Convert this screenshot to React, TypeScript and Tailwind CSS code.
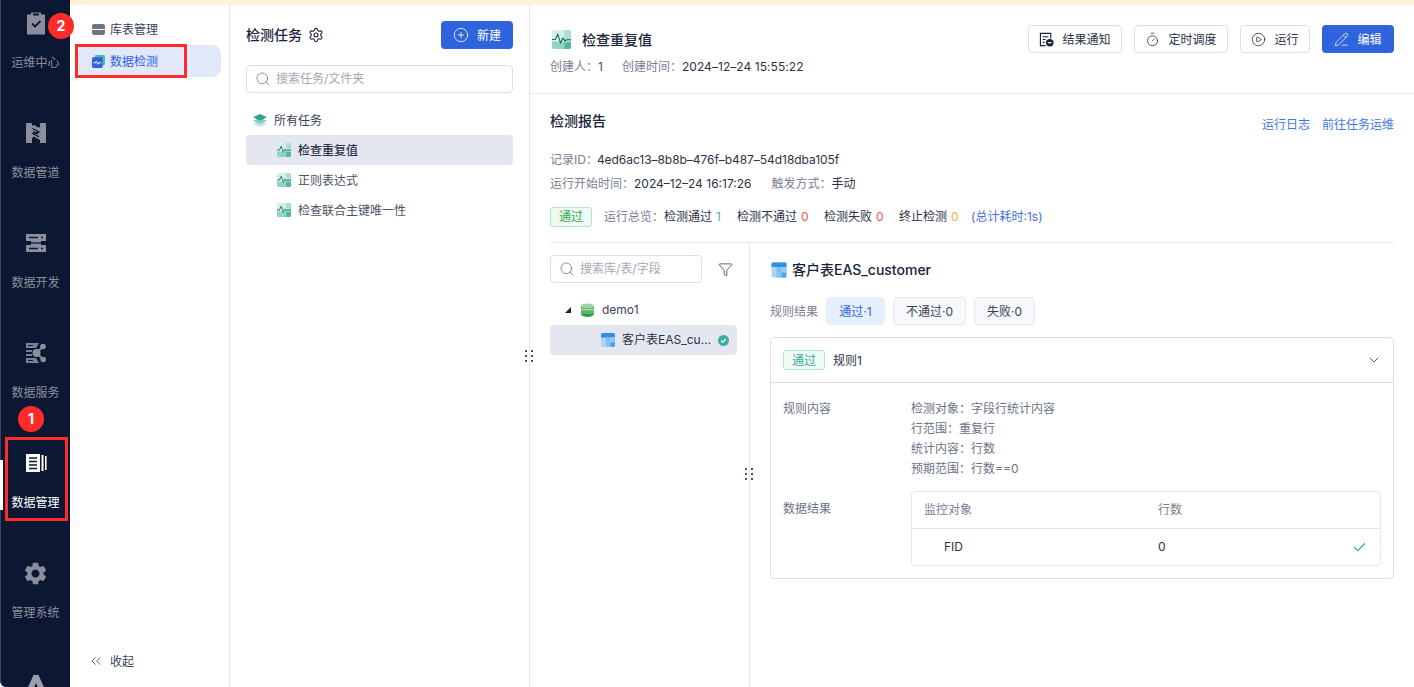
import React from "react";
import { MdSettings } from "react-icons/md";
import { Search, Settings, ChevronDown, Check, ChevronsLeft, Filter, CirclePlay, PencilLine, Timer, CirclePlus } from "lucide-react";

const FONT = "[font-family:Inter,'Noto_Sans_CJK_SC',sans-serif]";

function ClipIcon() {
  return (
    <svg width="24" height="24" viewBox="0 0 24 24">
      <path d="M3 3.5h4V1.5h10v2h4v20H3z" fill="#8b8f9c" />
      <path d="M8 12.5l3 3 5.5-5.5" fill="none" stroke="#0b1733" strokeWidth="1.8" />
      <rect x="9" y="2.5" width="6" height="2" fill="#0b1733" />
    </svg>
  );
}
function PipeIcon() {
  return (
    <svg width="20" height="20" viewBox="0 0 20 20">
      <rect width="20" height="20" fill="#8b8f9c" />
      <path d="M6 0h8v4l-1.5.8L8 2 6 3z" fill="#0b1733" />
      <path d="M6 20h8v-3l-2-1-4-2.5L6 15z" fill="#0b1733" />
      <path d="M6.5 5.5l6.5 3.5-6 1.5 6 3.5M7 8.5l5 2.8" fill="none" stroke="#0b1733" strokeWidth="1.3" />
    </svg>
  );
}
function DevIcon() {
  return (
    <svg width="20" height="18" viewBox="0 0 20 18">
      <path d="M0 0h20v7H15v4h5v7H0v-7h5V7H0z" fill="#8b8f9c" />
      <path d="M3 3.5h9M3 14.5h9" stroke="#0b1733" strokeWidth="1.3" />
      <path d="M15 3.5h2M15 14.5h2" stroke="#0b1733" strokeWidth="1.3" />
      <path d="M5 9h10" stroke="#0b1733" strokeWidth="1.2" />
    </svg>
  );
}
function ServiceIcon() {
  return (
    <svg width="20" height="20" viewBox="0 0 20 20">
      <path d="M0 0h13l-3 5H0zM0 7h6v2H0zM0 11h6v2H0zM0 15h10l3 5H0z" fill="#7a8090" />
      <path d="M2 2.5h5M2 17.5h5" stroke="#0b1733" strokeWidth="1.2" />
      <circle cx="10.5" cy="10" r="4" fill="#8b8f9c" />
      <circle cx="17" cy="3.5" r="2.8" fill="#8b8f9c" />
      <circle cx="17.2" cy="16.5" r="2.8" fill="#8b8f9c" />
      <path d="M10.5 10L17 3.5M10.5 10l6.7 6.5" stroke="#8b8f9c" strokeWidth="1.8" />
    </svg>
  );
}
function MgmtIcon() {
  return (
    <svg width="24" height="24" viewBox="0 0 24 24">
      <path d="M2 3h14v18H2z" fill="#fff" />
      <path d="M5 7h8M5 10.5h8M5 14h8M5 17.5h8" stroke="#0b1733" strokeWidth="1.5" />
      <path d="M17.5 4h2v16h-2zM21 5h1.6v14H21z" fill="#fff" />
    </svg>
  );
}
function LogoIcon() {
  return (
    <svg width="24" height="24" viewBox="0 0 24 24">
      <path d="M9.5 4h5l9 20h-6L12 12 7 24H.5z" fill="#9a9ea9" />
    </svg>
  );
}
function Wave({ size = 14 }: { size?: number }) {
  return (
    <svg width={size} height={size} viewBox="0 0 20 20">
      <rect x="0" y="0" width="20" height="20" rx="2" fill="#d4eee8" />
      <path d="M13 0h5a2 2 0 012 2v11h-7z" fill="#a9dfd3" />
      <path d="M0 12h13v8H2a2 2 0 01-2-2z" fill="#8ed5c4" />
      <path d="M13 13h7v5a2 2 0 01-2 2h-5z" fill="#4fb8a3" />
      <path d="M0 10h3.5L6 4.5l3 9 2.5-5 2 3 2-1.2H20" fill="none" stroke="#176b60" strokeWidth="1.2" />
    </svg>
  );
}
function TableIcon() {
  return (
    <svg width="14" height="14" viewBox="0 0 16 16">
      <rect width="16" height="16" rx="2" fill="#a9d6f7" />
      <path d="M0 2a2 2 0 012-2h12a2 2 0 012 2v3H0z" fill="#2f8fe3" />
      <rect x="5.5" y="5" width="5" height="5.5" fill="#7fbef1" />
      <rect x="10.5" y="5" width="5.5" height="5.5" fill="#93c9f4" />
      <path d="M10.5 10.5H16V14a2 2 0 01-2 2h-3.5z" fill="#4aa3ea" />
      <rect x="5.5" y="10.5" width="5" height="5.5" fill="#83c2f2" />
    </svg>
  );
}

function NavItem({ icon, label, active }: { icon: React.ReactNode; label: string; active?: boolean }) {
  return (
    <div className="h-[110px] shrink-0 flex flex-col items-center pt-[11px]">
      <div className="h-6 flex items-center justify-center">{icon}</div>
      <div className={`mt-[18px] h-5 leading-5 text-xs ${active ? "text-white" : "text-[#8b8f9c]"}`}>{label}</div>
    </div>
  );
}

function OutlineBtn({ icon, label, w }: { icon: React.ReactNode; label: string; w: string }) {
  return (
    <div className={`h-7 ${w} flex items-center justify-center gap-2 rounded border border-[#dcdfe9] text-xs text-[#2a3348]`}>
      {icon}
      <span className="mt-[2px]">{label}</span>
    </div>
  );
}

function Dots() {
  return (
    <div className="grid grid-cols-2 gap-x-1 gap-y-[3px]">
      {[0, 1, 2, 3, 4, 5].map((i) => (
        <span key={i} className="w-[2px] h-[2px] bg-[#4a5264]" />
      ))}
    </div>
  );
}

export default function App() {
  return (
    <div className={`relative w-[1414px] h-[687px] overflow-hidden flex bg-white ${FONT}`}>
      {/* nav rail */}
      <div className="w-[70px] h-full shrink-0 overflow-hidden bg-[#0b1733] border-l border-[#3b4559] rounded-bl-md flex flex-col">
        <NavItem icon={<ClipIcon />} label="运维中心" />
        <NavItem icon={<PipeIcon />} label="数据管道" />
        <NavItem icon={<DevIcon />} label="数据开发" />
        <NavItem icon={<ServiceIcon />} label="数据服务" />
        <NavItem icon={<MgmtIcon />} label="数据管理" active />
        <NavItem icon={<MdSettings size={27} color="#8b8f9c" />} label="管理系统" />
        <NavItem icon={<LogoIcon />} label="" />
      </div>

      <div className="flex-1 flex flex-col min-w-0">
        <div className="h-[5px] shrink-0 bg-[#fdf3d9]" />
        <div className="flex-1 flex min-h-0">
          {/* sub menu */}
          <div className="w-[160px] shrink-0 border-r border-[#e4e7ef] flex flex-col pt-2 pb-4 px-2">
            <div className="h-8 flex items-center pl-[14px] text-xs text-[#3a4257]">
              <svg width="13" height="13" viewBox="0 0 14 14">
                <path d="M0 3.5A2.5 2.5 0 012.5 1h9A2.5 2.5 0 0114 3.5V6.5H0zM0 7.5h14v3a2.5 2.5 0 01-2.5 2.5h-9A2.5 2.5 0 010 10.5z" fill="#6b7385" />
              </svg>
              <span className="ml-[5px] mt-[2px]">库表管理</span>
            </div>
            <div className="h-8 flex items-center pl-[14px] rounded-lg bg-[#e0e8f9] text-xs text-[#2f64dd]">
              <svg width="13" height="13" viewBox="0 0 14 14">
                <rect x="3" y="0" width="11" height="11" rx="1.5" fill="#3cc0b0" />
                <rect x="0" y="2.5" width="11.5" height="11.5" rx="1.5" fill="#2f64dd" />
                <path d="M1.5 8.5h2l1.2-2 1.6 3.5 1.2-2.2.8.7h1.8" fill="none" stroke="#fff" strokeWidth="1" />
              </svg>
              <span className="ml-[5px] mt-[2px]">数据检测</span>
            </div>
            <div className="mt-auto h-5 flex items-center pl-[10px] text-xs text-[#3a4257]">
              <ChevronsLeft size={16} strokeWidth={1.2} />
              <span className="ml-[6px] mt-[2px]">收起</span>
            </div>
          </div>

          {/* task list */}
          <div className="w-[300px] shrink-0 border-r border-[#e4e7ef] px-4 pt-4">
            <div className="h-7 flex items-center justify-between">
              <div className="flex items-center gap-[6px] text-sm font-medium text-[#17223b]">
                <span>检测任务</span>
                <Settings size={16} strokeWidth={1.6} />
              </div>
              <div className="w-[72px] h-7 rounded bg-[#2f64dd] text-white text-xs flex items-center justify-center gap-2">
                <CirclePlus size={16} strokeWidth={1.2} />
                <span className="mt-[2px]">新建</span>
              </div>
            </div>
            <div className="mt-4 h-7 rounded border border-[#dcdfe9] flex items-center pl-[8px] gap-[5px] text-xs text-[#a3a8b5]">
              <Search size={16} strokeWidth={1.2} color="#70778a" />
              <span>搜索任务/文件夹</span>
            </div>
            <div className="mt-3 h-[30px] flex items-center pl-[7px] text-xs text-[#3a4257]">
              <svg width="14" height="14" viewBox="0 0 14 14">
                <path d="M7 7.5L14 11 7 14 0 11z" fill="#c3e7de" />
                <path d="M7 4.5L14 8 7 11 0 8z" fill="#84d0be" />
                <path d="M7 1l7 3.2L7 7.5 0 4.2z" fill="#2f9e8d" />
              </svg>
              <span className="ml-[7px] mt-[2px]">所有任务</span>
            </div>
            <div className="h-[30px] flex items-center pl-[31px] rounded bg-[#e4e7ef] text-xs font-medium text-[#2a3348]">
              <Wave />
              <span className="ml-[7px] mt-[2px]">检查重复值</span>
            </div>
            <div className="h-[30px] flex items-center pl-[31px] text-xs text-[#4a5264]">
              <Wave />
              <span className="ml-[7px] mt-[2px]">正则表达式</span>
            </div>
            <div className="h-[30px] flex items-center pl-[31px] text-xs text-[#4a5264]">
              <Wave />
              <span className="ml-[7px] mt-[2px]">检查联合主键唯一性</span>
            </div>
          </div>

          {/* main */}
          <div className="flex-1 min-w-0 flex flex-col">
            <div className="h-[89px] shrink-0 border-b border-[#e8e9ee] px-5 pt-5 flex justify-between">
              <div>
                <div className="h-7 flex items-center pl-[2px] gap-[11px] text-sm font-medium text-[#17223b]">
                  <Wave size={19} />
                  <span className="mt-[2px]">检查重复值</span>
                </div>
                <div className="mt-[4px] h-5 leading-5 text-xs flex">
                  <span className="text-[#7a8091]">创建人：</span>
                  <span className="text-[#4a5264]">1</span>
                  <span className="ml-[19px] text-[#7a8091]">创建时间：</span>
                  <span className="text-[#2a3348] tracking-[0.06px]">2024–12–24 15:55:22</span>
                </div>
              </div>
              <div className="flex gap-3">
                <OutlineBtn
                  w="w-[94px]"
                  label="结果通知"
                  icon={
                    <svg width="15" height="15" viewBox="0 0 16 16">
                      <path d="M12.5 7V1.5h-11v13H7" fill="none" stroke="#17223b" strokeWidth="1.2" />
                      <path d="M4 5h6M4 8h3M4 11h2" stroke="#17223b" strokeWidth="1.2" />
                      <circle cx="11.5" cy="11.5" r="4" fill="#17223b" />
                      <path d="M9.5 11.5h4" stroke="#fff" strokeWidth="1.2" />
                    </svg>
                  }
                />
                <OutlineBtn w="w-[94px]" label="定时调度" icon={<Timer size={15} strokeWidth={1.3} />} />
                <OutlineBtn w="w-[70px]" label="运行" icon={<CirclePlay size={15} strokeWidth={1.3} />} />
                <div className="w-[72px] h-7 rounded bg-[#2f64dd] text-white text-xs flex items-center justify-center gap-2">
                  <PencilLine size={15} strokeWidth={1.2} />
                  <span className="mt-[2px]">编辑</span>
                </div>
              </div>
            </div>

            <div className="flex-1 min-h-0 px-5 flex flex-col">
              <div className="pt-[17px] flex justify-between">
                <div className="h-5 leading-5 text-sm font-medium text-[#17223b]">检测报告</div>
                <div className="pt-[4px] h-5 leading-5 flex gap-3 text-xs text-[#4478e0]">
                  <span>运行日志</span>
                  <span>前往任务运维</span>
                </div>
              </div>
              <div className="mt-[19px] h-5 leading-5 text-xs flex">
                <span className="text-[#7a8091]">记录ID：</span>
                <span className="text-[#2a3348] -ml-[1px] -tracking-[0.05px]">4ed6ac13–8b8b–476f–b487–54d18dba105f</span>
              </div>
              <div className="mt-1 h-5 leading-5 text-xs flex">
                <span className="text-[#7a8091]">运行开始时间：</span>
                <span className="text-[#2a3348]">2024–12–24 16:17:26</span>
                <span className="ml-5 text-[#7a8091]">触发方式：</span>
                <span className="text-[#2a3348]">手动</span>
              </div>
              <div className="mt-[13px] h-5 flex items-center text-xs text-[#2a3348]">
                <span className="w-[42px] h-5 rounded-[3px] border border-[#b5e6c1] bg-[#effbf2] text-[#2ea84f] flex items-center justify-center">通过</span>
                <span className="ml-3 text-[#7a8091]">运行总览：</span>
                <span>检测通过</span>
                <span className="ml-[4px] w-[5px] text-[#3db8a6]">1</span>
                <span className="ml-[16px]">检测不通过</span>
                <span className="ml-1 w-[8px] text-[#ef5350]">0</span>
                <span className="ml-[15px]">检测失败</span>
                <span className="ml-1 w-[8px] text-[#ef5350]">0</span>
                <span className="ml-[15px]">终止检测</span>
                <span className="ml-1 w-[8px] text-[#f5a93a]">0</span>
                <span className="ml-[12px] text-[#3f6fdd]">(总计耗时:1s)</span>
              </div>
              <div className="mt-[15px] flex-1 min-h-0 border-t border-[#e8e9ee] flex">
                {/* tree */}
                <div className="w-[200px] shrink-0 border-r border-[#e4e7ef] pr-3 pt-3">
                  <div className="flex items-center h-7">
                    <div className="w-[152px] h-7 rounded border border-[#dcdfe9] flex items-center pl-[8px] gap-[5px] text-xs text-[#a3a8b5]">
                      <Search size={16} strokeWidth={1.2} color="#70778a" />
                      <span>搜索库/表/字段</span>
                    </div>
                    <Filter size={15} strokeWidth={1.3} className="ml-[16px] text-[#3a4257]" />
                  </div>
                  <div className="mt-3 h-[30px] flex items-center pl-[15px] text-xs text-[#3a4257]">
                    <svg width="6" height="6" viewBox="0 0 6 6">
                      <path d="M6 0v6H0z" fill="#17223b" />
                    </svg>
                    <svg className="ml-[10px]" width="13" height="14" viewBox="0 0 13 14">
                      <ellipse cx="6.5" cy="11" rx="6.5" ry="3" fill="#2f9b45" />
                      <rect x="0" y="3" width="13" height="8" fill="#5ab868" />
                      <rect x="0" y="6" width="13" height="1.2" fill="#a6dcae" />
                      <ellipse cx="6.5" cy="3" rx="6.5" ry="2.6" fill="#9bd6a4" />
                    </svg>
                    <span className="ml-2">demo1</span>
                  </div>
                  <div className="w-[187px] h-[30px] rounded bg-[#e4e7ef] flex items-center pl-[51px] text-xs text-[#2a3348]">
                    <TableIcon />
                    <span className="ml-[7px] w-[95px] truncate">客户表EAS_customer</span>
                    <svg className="ml-[1px]" width="11" height="11" viewBox="0 0 11 11">
                      <circle cx="5.5" cy="5.5" r="5.5" fill="#3cae9f" />
                      <path d="M3 5.6l1.8 1.8L8 4" fill="none" stroke="#fff" strokeWidth="1.2" />
                    </svg>
                  </div>
                </div>

                {/* detail */}
                <div className="flex-1 min-w-0 pl-5">
                  <div className="pt-[17px] h-[54px] flex items-start">
                    <div className="h-5 flex items-center pl-[2px] gap-[6px] text-sm font-medium text-[#17223b]">
                      <span className="scale-110"><TableIcon /></span>
                      <span>客户表EAS_customer</span>
                    </div>
                  </div>
                  <div className="h-7 flex items-center text-xs">
                    <span className="text-[#7a8091] mt-[2px]">规则结果</span>
                    <span className="ml-2 w-[59px] h-7 pt-[2px] rounded bg-[#e6effd] text-[#2f64dd] flex items-center justify-center">通过·1</span>
                    <span className="ml-2 w-[73px] h-7 pt-[2px] rounded border border-[#e4e7ef] bg-[#f7f8fc] text-[#3a4257] flex items-center justify-center">不通过·0</span>
                    <span className="ml-2 w-[61px] h-7 pt-[2px] rounded border border-[#e4e7ef] bg-[#f7f8fc] text-[#3a4257] flex items-center justify-center">失败·0</span>
                  </div>
                  <div className="mt-3 h-[242px] rounded border border-[#dcdfe9]">
                    <div className="h-[45px] border-b border-[#dcdfe9] px-3 flex items-center text-xs text-[#2a3348]">
                      <span className="w-[42px] h-5 pt-[1px] rounded-[3px] border border-[#b3e3d9] bg-[#effaf7] text-[#3bab97] flex items-center justify-center">通过</span>
                      <span className="ml-2 mt-[2px]">规则1</span>
                      <ChevronDown size={16} strokeWidth={1.2} className="ml-auto -mr-[1px]" />
                    </div>
                    <div className="px-3 pt-[16px] text-xs flex text-[#6b7385]">
                      <div className="w-[128px] shrink-0">
                        <div className="h-5 leading-5">规则内容</div>
                        <div className="h-5 leading-5 mt-20">数据结果</div>
                      </div>
                      <div className="flex-1 min-w-0">
                        <div className="h-5 leading-5"><span>检测对象：</span><span>字段行统计内容</span></div>
                        <div className="h-5 leading-5"><span>行范围：</span><span>重复行</span></div>
                        <div className="h-5 leading-5"><span>统计内容：</span><span>行数</span></div>
                        <div className="h-5 leading-5"><span>预期范围：</span><span>行数==0</span></div>
                        <div className="mt-[12px] h-[75px] rounded border border-[#e4e7ef]">
                          <div className="h-[37px] border-b border-[#e4e7ef] flex items-center text-[#7a8091]">
                            <span className="w-[246px] pl-3">监控对象</span>
                            <span>行数</span>
                          </div>
                          <div className="h-9 flex items-center text-[#2a3348]">
                            <span className="w-[246px] pl-8">FID</span>
                            <span>0</span>
                            <Check size={15} strokeWidth={2.2} className="ml-auto mr-[13px] text-[#3cae9f]" />
                          </div>
                        </div>
                      </div>
                    </div>
                  </div>
                </div>
              </div>
            </div>
          </div>
        </div>
      </div>

      {/* drag handles */}
      <div className="absolute left-[525px] top-[350px]"><Dots /></div>
      <div className="absolute left-[745px] top-[468px]"><Dots /></div>

      {/* active nav marker */}
      <div className="absolute left-0 top-[460px] w-[3px] h-[50px] bg-white" />

      {/* annotations */}
      <div className="absolute left-[5px] top-[437px] w-[63px] h-[84px] border-[3px] border-[#ff2b2b]" />
      <div className="absolute left-[75px] top-[44px] w-[112px] h-[34px] border-[3px] border-[#ff2b2b]" />
      <div className="absolute left-[18px] top-[406px] w-[26px] h-[26px] rounded-full bg-[#ff2b2b] text-white text-sm font-bold flex items-center justify-center">1</div>
      <div className="absolute left-[48px] top-[13px] w-[26px] h-[26px] rounded-full bg-[#ff2b2b] text-white text-sm font-bold flex items-center justify-center">2</div>
    </div>
  );
}
